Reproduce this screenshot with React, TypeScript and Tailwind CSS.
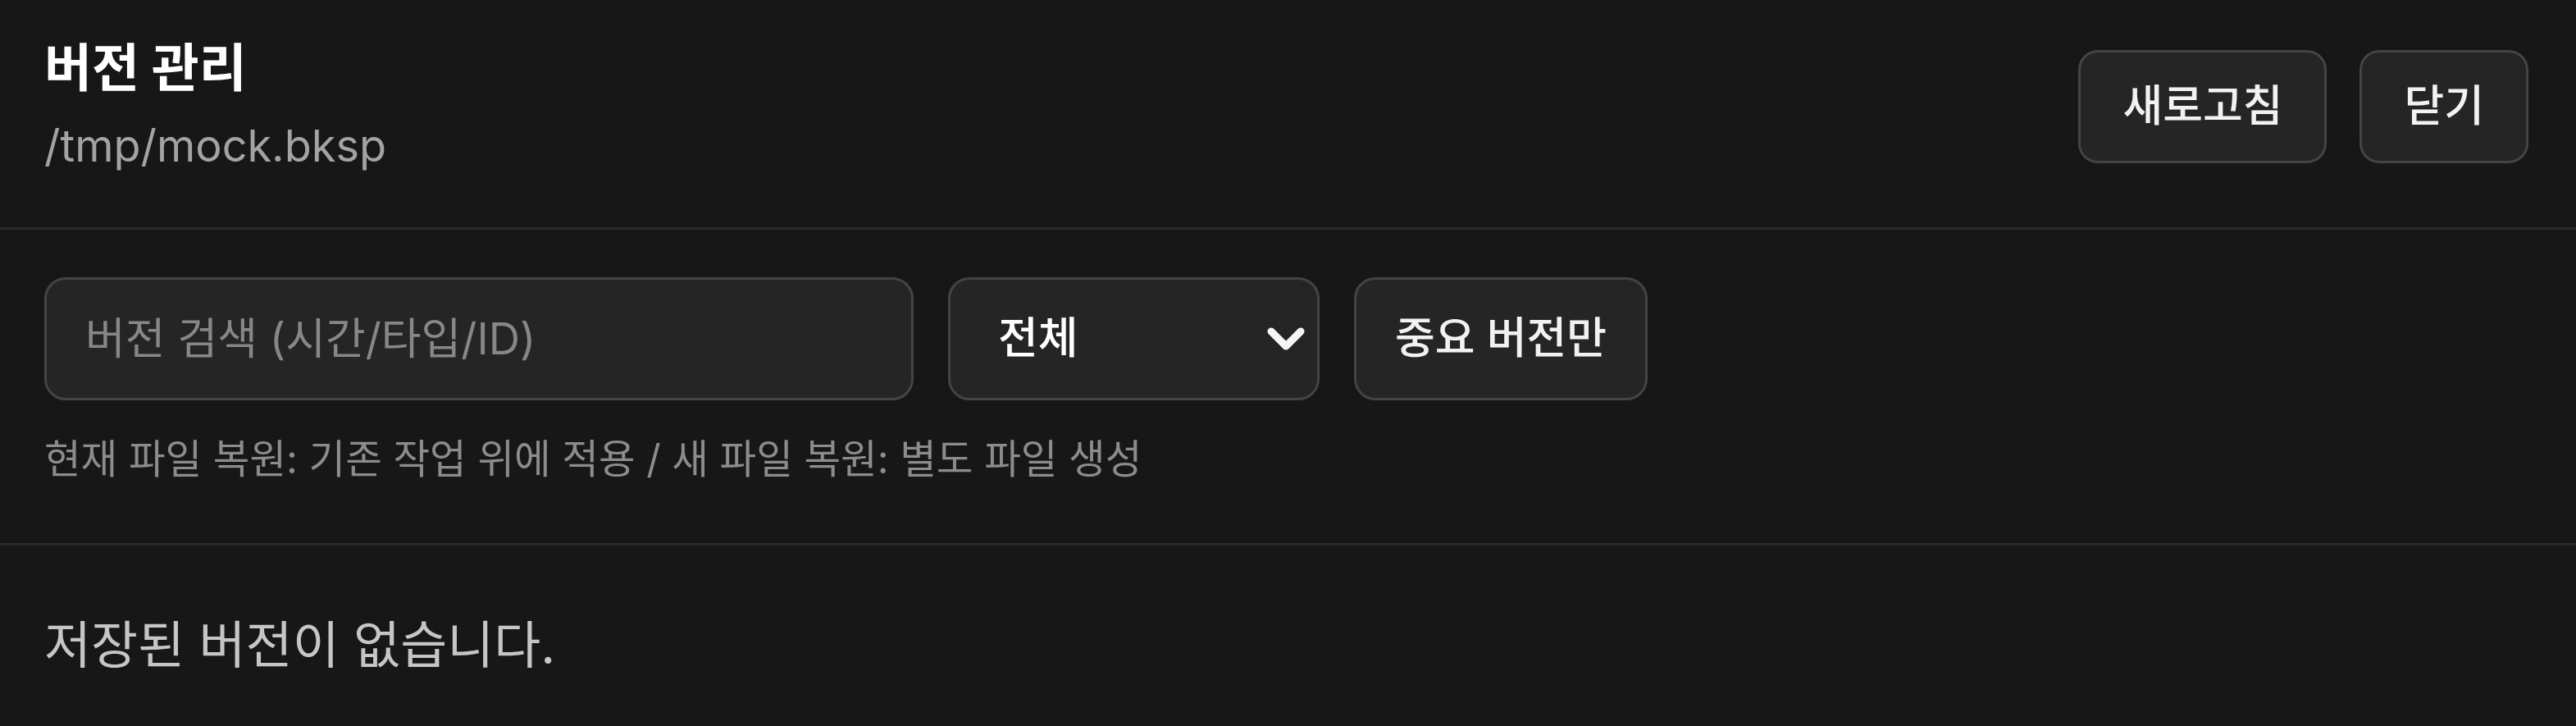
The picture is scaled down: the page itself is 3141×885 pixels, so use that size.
import { useState } from "react";

function ChevronDown() {
  return (
    <svg
      viewBox="0 0 48 32"
      className="pointer-events-none absolute right-[17px] top-1/2 h-[32px] w-[48px] -translate-y-1/2"
      fill="none"
      stroke="#f5f5f5"
      strokeWidth={9}
      strokeLinecap="round"
      strokeLinejoin="round"
    >
      <path d="M6 7 L24 25 L42 7" />
    </svg>
  );
}

export default function App() {
  const [query, setQuery] = useState("");
  const [kind, setKind] = useState("all");
  const [starred, setStarred] = useState(false);

  return (
    <div
      className="min-h-screen w-full bg-[#171717] text-white"
      style={{ fontFamily: 'Inter, "Noto Sans CJK KR", sans-serif' }}
    >
      {/* header */}
      <div className="flex items-center justify-between border-b-[3px] border-[#2a2a2a] pl-[54px] pr-[58px] pt-[48px] pb-[65px]">
        <div className="flex flex-col">
          <h1 className="text-[63px] font-bold leading-[68px] text-white">
            버전 관리
          </h1>
          <p className="mt-[28px] text-[54px] leading-[68px] text-[#a3a3a3]">
            /tmp/mock.bksp
          </p>
        </div>
        <div className="flex gap-[40px]">
          <button className="h-[138px] rounded-[24px] border-[3px] border-[#444444] bg-[#252525] px-[51px] text-[53px] font-medium text-[#f2f2f2]">
            새로고침
          </button>
          <button className="h-[138px] rounded-[24px] border-[3px] border-[#444444] bg-[#252525] px-[51px] text-[53px] font-medium text-[#f2f2f2]">
            닫기
          </button>
        </div>
      </div>

      {/* filters */}
      <div className="border-b-[3px] border-[#2a2a2a] px-[54px] pt-[58px] pb-[69px]">
        <div className="flex gap-[42px]">
          <input
            value={query}
            onChange={(e) => setQuery(e.target.value)}
            placeholder="버전 검색 (시간/타입/ID)"
            className="h-[150px] w-[1060px] rounded-[26px] border-[3px] border-[#444444] bg-[#252525] px-[47px] text-[53px] text-white outline-none placeholder:text-[#878787]"
          />
          <div className="relative">
            <select
              value={kind}
              onChange={(e) => setKind(e.target.value)}
              className="h-[150px] w-[453px] appearance-none rounded-[26px] border-[3px] border-[#444444] bg-[#252525] pl-[58px] pr-[80px] text-[53px] font-medium text-white outline-none"
            >
              <option value="all">전체</option>
              <option value="auto">자동</option>
              <option value="manual">수동</option>
            </select>
            <ChevronDown />
          </div>
          <button
            onClick={() => setStarred(!starred)}
            className="h-[150px] rounded-[26px] border-[3px] border-[#444444] bg-[#252525] px-[47px] text-[53px] font-medium text-[#f2f2f2]"
          >
            중요 버전만
          </button>
        </div>
        <p className="mt-[39px] text-[48.5px] leading-[66px] text-[#8c8c8c]">
          현재 파일 복원: 기존 작업 위에 적용 / 새 파일 복원: 별도 파일 생성
        </p>
      </div>

      {/* list */}
      <div className="px-[54px] pt-[80px]">
        <p className="text-[62px] leading-[84px] text-[#c6c6c6]">저장된 버전이 없습니다.</p>
      </div>
    </div>
  );
}
